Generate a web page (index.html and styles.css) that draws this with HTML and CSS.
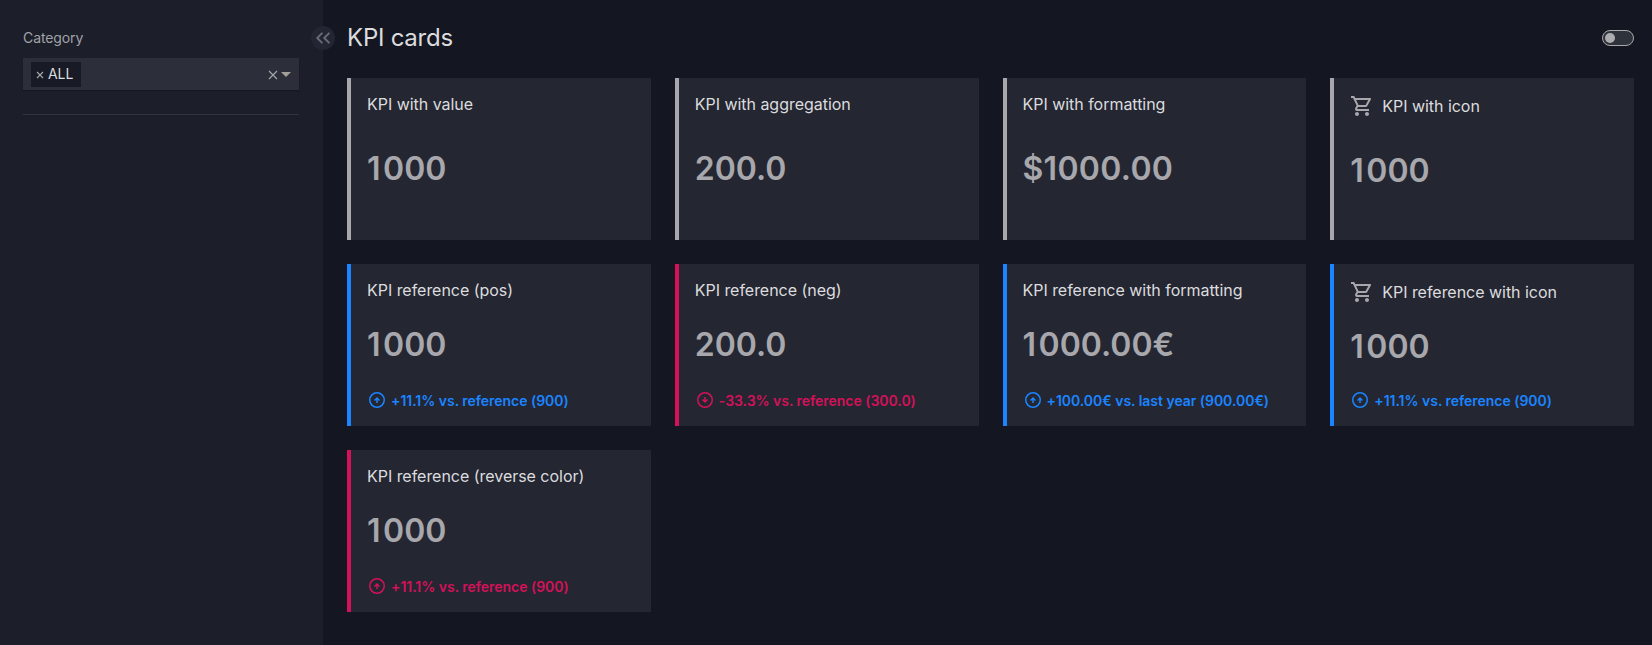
FILE: index.html
```html
<!DOCTYPE html>
<html lang="en">
<head>
<meta charset="utf-8">
<title>KPI cards</title>
<link rel="stylesheet" href="styles.css">
</head>
<body>
<svg width="0" height="0" class="sprite">
  <symbol id="cart" viewBox="0 0 24 24"><path d="M15.55 13c.75 0 1.41-.41 1.75-1.03l3.58-6.49A.996.996 0 0 0 20.01 4H5.21l-.94-2H1v2h2l3.6 7.59-1.35 2.44C4.52 15.37 5.48 17 7 17h12v-2H7l1.1-2h7.45zM6.16 6h12.15l-2.76 5H8.53L6.16 6zM7 18c-1.1 0-1.99.9-1.99 2S5.9 22 7 22s2-.9 2-2-.9-2-2-2zm10 0c-1.1 0-1.99.9-1.99 2s.89 2 1.99 2 2-.9 2-2-.9-2-2-2z"/></symbol>
  <symbol id="up" viewBox="0 0 20 20"><path d="M9.25 13h1.5V9.87l1.19 1.19L13 10 10 7l-3 3 1.06 1.06 1.19-1.19zM10 18a8 8 0 1 1 0-16 8 8 0 0 1 0 16zm0-1.5a6.5 6.5 0 1 0 0-13 6.5 6.5 0 0 0 0 13z"/></symbol>
  <symbol id="down" viewBox="0 0 20 20"><path d="M10 13l3-3-1.06-1.06-1.19 1.19V7h-1.5v3.13L8.06 8.94 7 10zM10 18a8 8 0 1 1 0-16 8 8 0 0 1 0 16zm0-1.5a6.5 6.5 0 1 0 0-13 6.5 6.5 0 0 0 0 13z"/></symbol>
</svg>
<div class="page">
  <aside class="sidebar">
    <label class="label">Category</label>
    <div class="select">
      <div class="tag"><svg class="tag-x" viewBox="0 0 8 8"><path d="M1 1l6 6M7 1l-6 6"/></svg><span>ALL</span></div>
      <svg class="clear" viewBox="0 0 10 10"><path d="M1 1l8 8M9 1l-8 8"/></svg>
      <svg class="arrow" viewBox="0 0 10 5"><path d="M0 0h10L5 5z"/></svg>
    </div>
    <hr class="rule">
    <button class="collapse"><svg viewBox="0 0 24 24"><path d="M11.4 6.8l-5.2 5.2 5.2 5.2M18.4 6.8l-5.2 5.2 5.2 5.2"/></svg></button>
  </aside>
  <main class="main">
    <header class="header"><h1>KPI cards</h1><div class="switch"><i></i></div></header>
    <section class="grid">
      <article class="card"><h2>KPI with value</h2><p class="value lead">1000</p></article>
      <article class="card"><h2>KPI with aggregation</h2><p class="value">200.0</p></article>
      <article class="card"><h2>KPI with formatting</h2><p class="value currency">$1000.00</p></article>
      <article class="card icon"><h2><svg><use href="#cart"/></svg>KPI with icon</h2><p class="value lead">1000</p></article>
      <article class="card ref pos"><h2>KPI reference (pos)</h2><p class="value lead">1000</p><p class="delta"><svg><use href="#up"/></svg>+11.1% vs. reference (900)</p></article>
      <article class="card ref neg"><h2>KPI reference (neg)</h2><p class="value">200.0</p><p class="delta"><svg><use href="#down"/></svg>-33.3% vs. reference (300.0)</p></article>
      <article class="card ref pos"><h2>KPI reference with formatting</h2><p class="value lead">1000.00€</p><p class="delta"><svg><use href="#up"/></svg>+100.00€ vs. last year (900.00€)</p></article>
      <article class="card ref pos icon"><h2><svg><use href="#cart"/></svg>KPI reference with icon</h2><p class="value lead">1000</p><p class="delta"><svg><use href="#up"/></svg>+11.1% vs. reference (900)</p></article>
      <article class="card ref neg"><h2>KPI reference (reverse color)</h2><p class="value lead">1000</p><p class="delta"><svg><use href="#up"/></svg>+11.1% vs. reference (900)</p></article>
    </section>
  </main>
</div>
</body>
</html>
```
FILE: styles.css
```css
* { box-sizing: border-box; margin: 0; padding: 0; }
body { background: #141721; font-family: Inter, "Liberation Sans", sans-serif; font-optical-sizing: none; color: #dcdcde; overflow: hidden; }
.sprite { position: absolute; }
.page { display: flex; height: 645px; }
.sidebar { position: relative; width: 323px; flex: none; background: #1c1e2a; padding: 28px 24px 0 23px; }
.label { display: block; font-size: 14px; line-height: 20px; letter-spacing: -.1px; color: #a1a2a7; }
.select { display: flex; align-items: center; height: 32px; margin-top: 10px; padding: 0 8px; background: #2c2e39; box-shadow: 0 1px 1px rgba(10, 12, 20, .3); }
.tag { display: flex; align-items: center; height: 25px; padding: 0 8px 0 5px; gap: 4px; background: #181a25; font-size: 14px; letter-spacing: -.1px; margin-right: auto; }
.tag span { padding-bottom: 1px; }
.tag-x { width: 8px; height: 8px; margin-top: 1px; }
.tag-x path, .clear path { fill: none; stroke: #a3a4a8; stroke-width: 1.2; }
.clear { width: 10px; height: 10px; margin: 1px 3px 0 0; }
.arrow { width: 10px; height: 5px; fill: #a39f99; }
.rule { border: 0; height: 1px; margin-top: 24px; background: #32343f; }
.collapse { position: absolute; left: 311px; top: 26px; width: 24px; height: 24px; border: 0; border-radius: 50%; background: #232632; }
.collapse svg { display: block; width: 24px; height: 24px; fill: none; stroke: #6b6d76; stroke-width: 1.8; }
.main { flex: 1; padding: 24px 18px 0 24px; }
.header { display: flex; justify-content: space-between; align-items: center; height: 28px; margin-bottom: 26px; }
h1 { font-size: 24px; font-weight: 400; line-height: 28px; letter-spacing: -.25px; }
.switch { width: 32px; height: 16px; border: 1px solid #a9a9ad; border-radius: 8px; background: #2e323b; padding: 2px; }
.switch i { display: block; width: 10px; height: 10px; border-radius: 50%; background: #acacb0; }
.grid { display: grid; grid-template-columns: repeat(4, 1fr); grid-auto-rows: 162px; gap: 24px; }
.card { display: flex; flex-direction: column; background: #242632; border-left: 4px solid #a7a7ac; padding: 16px; }
h2 { display: flex; align-items: center; gap: 8px; font-size: 16px; font-weight: 400; line-height: 20px; letter-spacing: -.03px; }
h2 svg { width: 24px; height: 24px; fill: #a7a7ac; }
.value { font-size: 32px; font-weight: 600; line-height: 40px; margin-top: 35px; color: #a7a7ac; }
.lead::first-letter { letter-spacing: 2.5px; }
.currency { letter-spacing: .3px; }
.icon .value { margin-top: 33px; }
.ref .value { margin-top: 25px; }
.ref.icon .value { margin-top: 23px; }
.delta { display: flex; align-items: center; gap: 4px; height: 20px; margin-top: auto; font-size: 14px; font-weight: 600; letter-spacing: -.03px; }
.delta svg { width: 20px; height: 20px; fill: currentColor; }
.pos { border-color: #1a85ff; }
.pos .delta { color: #1a85ff; }
.neg { border-color: #d41159; }
.neg .delta { color: #d41159; }
```
